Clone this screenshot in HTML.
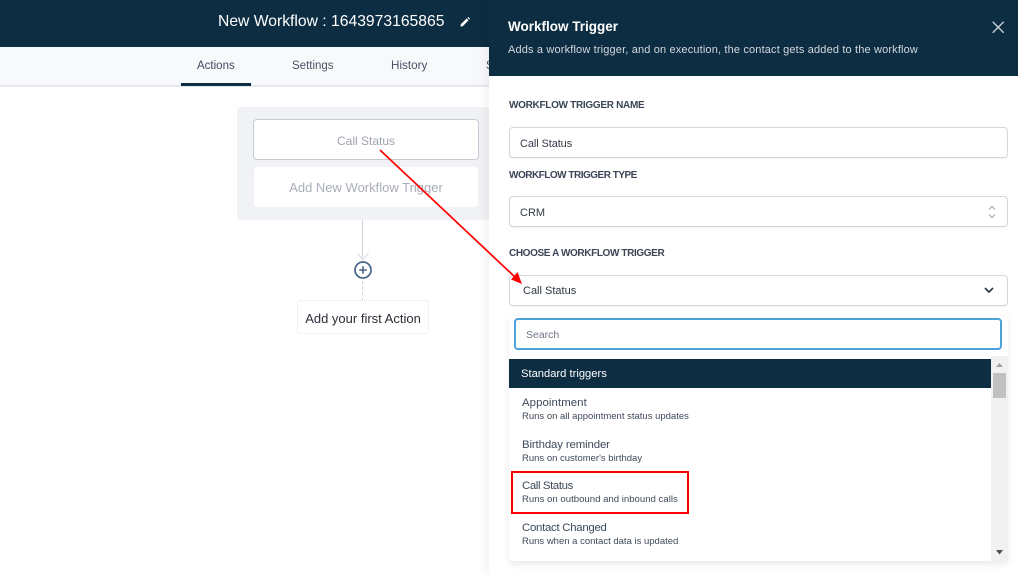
<!DOCTYPE html>
<html>
<head>
<meta charset="utf-8">
<style>
html,body{margin:0;padding:0;background:#fff;}
#p{position:relative;width:1018px;height:574px;overflow:hidden;background:#fff;font-family:"Liberation Sans",sans-serif;}
#p div{position:absolute;box-sizing:border-box;white-space:nowrap;}
.t{line-height:16px;}
.lab{left:509px;font-size:10px;font-weight:bold;color:#3c4556;letter-spacing:-.3px;}
.box{left:509px;width:499px;background:#fff;border:1px solid #d3d6de;border-radius:4px;box-shadow:0 1px 1px rgba(0,0,0,.05);}
.ti{left:522px;font-size:11.4px;color:#3d4a5a;}
.ts{left:522px;font-size:9.5px;color:#3f4a5a;}
</style>
</head>
<body>
<div id="p">
  <div style="left:0;top:0;width:490px;height:47px;background:#0d2d42"></div>
  <div style="left:0;top:47px;width:490px;height:39px;background:#f8f9fb"></div>
  <div style="left:0;top:85px;width:490px;height:2px;background:#e6e7ec"></div>
  <div class="t" style="left:218px;top:14px;font-size:15.7px;color:#fff">New Workflow : 1643973165865</div>
  <svg style="position:absolute;left:459px;top:16px" width="12" height="12" viewBox="0 0 12 12"><path d="M1.5 10.5 L1.8 8.3 L7.6 2.5 L9.5 4.4 L3.7 10.2 Z M8.3 1.8 L9.2 1 L11 2.8 L10.2 3.7 Z" fill="#fff"/></svg>
  <div class="t" style="left:197px;top:58px;font-size:11.5px;color:#3f4a5c">Actions</div>
  <div class="t" style="left:292px;top:58px;font-size:11.5px;color:#4a5364">Settings</div>
  <div class="t" style="left:391px;top:58px;font-size:11.7px;color:#4a5364">History</div>
  <div class="t" style="left:486px;top:58px;font-size:11.5px;color:#4a5364">S</div>
  <div style="left:181px;top:83px;width:70px;height:3px;background:#0d2d42"></div>

  <div style="left:237px;top:107px;width:253px;height:113px;background:#f1f2f5;border-radius:4px"></div>
  <div class="t" style="left:253px;top:119px;width:226px;height:41px;background:#fff;border:1px solid #c6cad2;border-radius:4px;text-align:center;line-height:42px;font-size:12px;color:#9ea3b0">Call Status</div>
  <div class="t" style="left:254px;top:167px;width:224px;height:40px;background:#fff;border-radius:3px;text-align:center;line-height:41px;font-size:13px;color:#a9adb9">Add New Workflow Trigger</div>
  <div style="left:362px;top:220px;width:1px;height:38px;background:#cdd1d9"></div>
  <svg style="position:absolute;left:355px;top:250px" width="16" height="12" viewBox="0 0 16 12"><path d="M2.5 3 L8 10 L13.5 3" fill="none" stroke="#d5d8df" stroke-width="1"/></svg>
  <svg style="position:absolute;left:353px;top:260px" width="20" height="20" viewBox="0 0 20 20"><circle cx="10" cy="10" r="8" fill="#fff" stroke="#47648a" stroke-width="1.7"/><path d="M10 6.2V13.8M6.2 10H13.8" stroke="#47648a" stroke-width="1.6"/></svg>
  <div style="left:362px;top:281px;width:0;height:20px;border-left:1px dashed #cdd1d9"></div>
  <div class="t" style="left:297px;top:300px;width:132px;height:34px;background:#fff;border:1px dotted #e2e4e9;border-radius:3px;text-align:center;line-height:35px;font-size:13px;color:#2b303a">Add your first Action</div>

  <div style="left:489px;top:0;width:529px;height:574px;background:#fff;box-shadow:-3px 0 10px rgba(0,0,0,.06)"></div>
  <div style="left:489px;top:0;width:529px;height:76px;background:#0d2d42"></div>
  <div class="t" style="left:508px;top:19px;font-size:13.5px;font-weight:bold;color:#fff">Workflow Trigger</div>
  <div class="t" style="left:508px;top:42px;font-size:11px;color:#d3d8de;letter-spacing:.155px">Adds a workflow trigger, and on execution, the contact gets added to the workflow</div>
  <svg style="position:absolute;left:991px;top:20px" width="14" height="14" viewBox="0 0 14 14"><path d="M1.7 1.7 L12.7 12.7 M12.7 1.7 L1.7 12.7" stroke="#c8d0da" stroke-width="1.4" fill="none"/></svg>

  <div class="t lab" style="top:98px">WORKFLOW TRIGGER NAME</div>
  <div class="box" style="top:127px;height:31px"></div>
  <div class="t" style="left:520px;top:136px;font-size:11px;color:#333b47;letter-spacing:-.1px">Call Status</div>
  <div class="t lab" style="top:168px;letter-spacing:-.5px">WORKFLOW TRIGGER TYPE</div>
  <div class="box" style="top:196px;height:31px"></div>
  <div class="t" style="left:520px;top:205px;font-size:11px;color:#333b47">CRM</div>
  <svg style="position:absolute;left:986px;top:204px" width="12" height="16" viewBox="0 0 12 16"><path d="M3 5.5 L6 2.5 L9 5.5 M3 10.5 L6 13.5 L9 10.5" fill="none" stroke="#a3a8b3" stroke-width="1.1"/></svg>
  <div class="t lab" style="top:246px;letter-spacing:-.38px">CHOOSE A WORKFLOW TRIGGER</div>
  <div class="box" style="top:275px;height:31px"></div>
  <div class="t" style="left:523px;top:283px;font-size:11px;color:#2c3442">Call Status</div>
  <svg style="position:absolute;left:983px;top:284px" width="12" height="12" viewBox="0 0 12 12"><path d="M2 4 L6 8 L10 4" fill="none" stroke="#2e3848" stroke-width="1.7"/></svg>

  <div style="left:509px;top:316px;width:499px;height:245px;background:#fff;border-radius:0 0 4px 4px;box-shadow:0 3px 8px rgba(0,0,0,.09)"></div>
  <div style="left:514px;top:318px;width:488px;height:32px;background:#fff;border:2px solid #4ba3dc;border-radius:4px"></div>
  <div class="t" style="left:526px;top:327px;font-size:10.5px;color:#6f7785">Search</div>
  <div style="left:509px;top:359px;width:482px;height:29px;background:#0d2d42"></div>
  <div class="t" style="left:521px;top:366px;font-size:11.2px;color:#fff">Standard triggers</div>

  <div style="left:991px;top:356px;width:17px;height:205px;background:#f1f1f1"></div>
  <div style="left:993px;top:373px;width:13px;height:25px;background:#c1c1c1"></div>
  <svg style="position:absolute;left:991px;top:359px" width="17" height="10" viewBox="0 0 17 10"><path d="M5 8 L8.5 4 L12 8 Z" fill="#a3a3a3"/></svg>
  <svg style="position:absolute;left:991px;top:548px" width="17" height="10" viewBox="0 0 17 10"><path d="M5 2 L12 2 L8.5 6.5 Z" fill="#505050"/></svg>

  <div class="t ti" style="top:395px;letter-spacing:.08px">Appointment</div>
  <div class="t ts" style="top:409px">Runs on all appointment status updates</div>
  <div class="t ti" style="top:437px;letter-spacing:-.12px">Birthday reminder</div>
  <div class="t ts" style="top:451px">Runs on customer's birthday</div>
  <div class="t ti" style="top:478px;letter-spacing:-.38px">Call Status</div>
  <div class="t ts" style="top:492px;font-size:9.6px">Runs on outbound and inbound calls</div>
  <div class="t ti" style="top:520px;letter-spacing:-.27px">Contact Changed</div>
  <div class="t ts" style="top:534px">Runs when a contact data is updated</div>
  <div style="left:511px;top:471px;width:178px;height:43px;border:2px solid #f00"></div>

  <svg style="position:absolute;left:0;top:0" width="1018" height="574" viewBox="0 0 1018 574"><path d="M380 150 L516 278" stroke="#f00" stroke-width="1.7" fill="none"/><path d="M522 284 L511 279.5 L517.5 272 Z" fill="#f00"/></svg>
</div>
</body>
</html>
